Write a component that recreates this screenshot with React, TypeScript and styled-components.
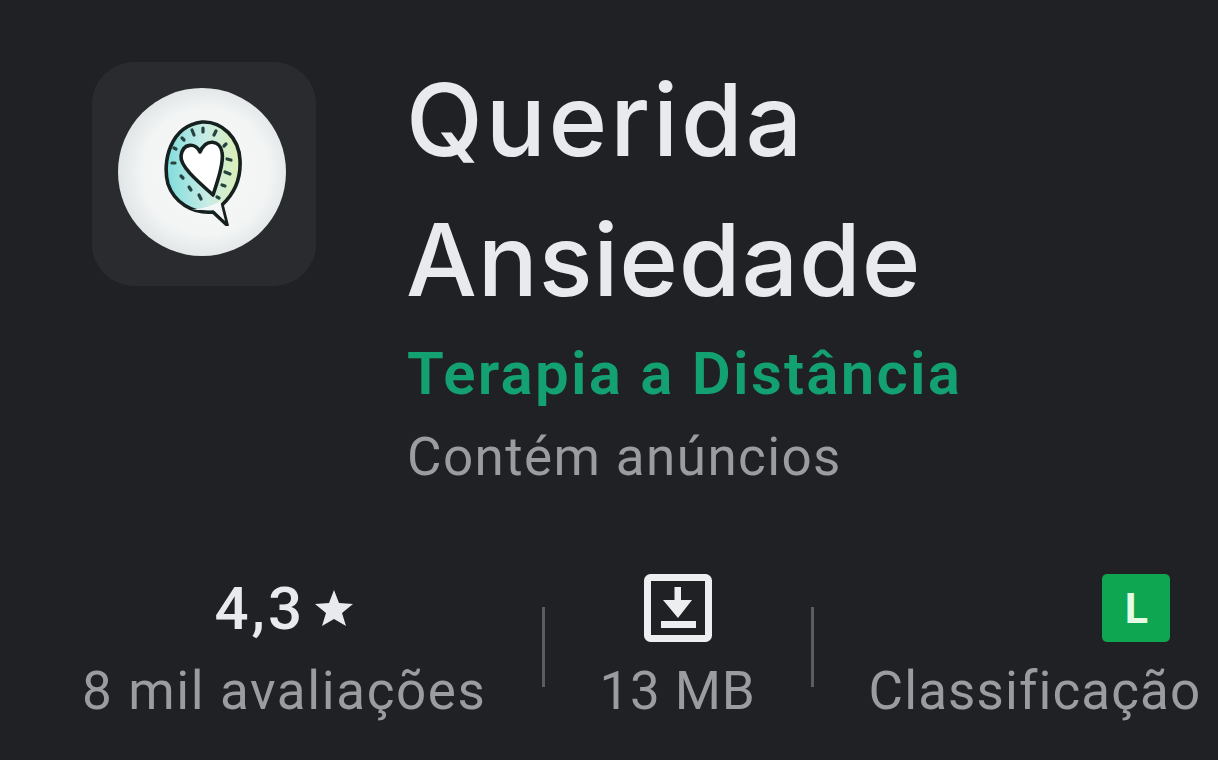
import React from 'react'
import styled, { createGlobalStyle } from 'styled-components'

const GlobalStyle = createGlobalStyle`
  html, body {
    margin: 0;
    padding: 0;
    background: #202125;
  }
`
const Page = styled.div`
  width: 1218px;
  height: 760px;
  overflow: hidden;
  background: #202125;
  font-family: Roboto, 'Liberation Sans', sans-serif;
  padding-top: 62px;
  box-sizing: border-box;
`
const Header = styled.header`
  display: flex;
  align-items: flex-start;
  padding-left: 92px;
`
const IconTile = styled.div`
  width: 224px;
  height: 224px;
  min-width: 224px;
  padding: 26px 30px 30px 26px;
  box-sizing: border-box;
  border-radius: 42px;
  background: #292b2f;
`
const IconDisc = styled.div`
  width: 168px;
  height: 168px;
  border-radius: 50%;
  background: radial-gradient(circle at 52% 50%, #f7f9f9 0%, #f3f5f5 52%, #e0e5e6 72%, #f0f3f3 88%, #f7f9f9 100%);
  display: flex;
  align-items: center;
  justify-content: center;
`
const AppInfo = styled.div`
  margin-left: 92px;
  margin-top: -12px;
`
const AppTitle = styled.h1`
  margin: 0 0 0 -2px;
  font-family: Inter, Roboto, sans-serif;
  font-size: 100px;
  font-weight: 530;
  line-height: 140px;
  color: #e9eaed;
`
const TitleLine = styled.span<{ $spacing: number }>`
  display: block;
  letter-spacing: ${p => p.$spacing}px;
`
const Developer = styled.div`
  margin-top: 9px;
  margin-left: -1px;
  font-size: 60px;
  font-weight: 600;
  line-height: 70px;
  letter-spacing: 2.2px;
  color: #13a171;
`
const AdsNote = styled.div`
  margin-top: 18px;
  margin-left: -1px;
  font-size: 53px;
  line-height: 60px;
  letter-spacing: 1.4px;
  color: #9a9ca0;
`
const Stats = styled.section`
  display: flex;
  gap: 55px;
  padding-left: 82px;
  margin-top: 87px;
`
const Stat = styled.div`
  display: flex;
  flex-direction: column;
  align-items: center;
  flex-shrink: 0;
`
const StatTop = styled.div<{ $right?: boolean }>`
  height: 68px;
  display: flex;
  align-items: center;
  justify-content: center;
  align-self: ${p => (p.$right ? 'flex-end' : 'center')};
  margin-right: ${p => (p.$right ? '31px' : '0')};
`
const Rating = styled.span`
  font-size: 60px;
  font-weight: 500;
  letter-spacing: 3px;
  color: #e9eaed;
  display: flex;
  align-items: center;
  gap: 9px;
`
const StatLabel = styled.div<{ $spacing: number }>`
  margin-top: 19px;
  font-size: 53px;
  line-height: 60px;
  letter-spacing: ${p => p.$spacing}px;
  white-space: nowrap;
  color: #9a9ca0;
`
const Divider = styled.div`
  width: 3px;
  height: 80px;
  margin-top: 33px;
  background: #5a5c60;
  flex-shrink: 0;
`
const AgeBadge = styled.div`
  width: 68px;
  height: 68px;
  border-radius: 5px;
  background: #0fa651;
  color: #e4fbe6;
  display: flex;
  align-items: center;
  justify-content: center;
  font-size: 43px;
  font-weight: 700;
`

const BubbleHeart = () => (
  <svg width="80" height="108" viewBox="0 0 80 108">
    <defs>
      <linearGradient id="bubbleFill" x1="0" y1="0.55" x2="1" y2="0.5">
        <stop offset="0" stopColor="#7fdcdc" />
        <stop offset="0.55" stopColor="#c8ece6" />
        <stop offset="1" stopColor="#dcefb4" />
      </linearGradient>
    </defs>
    <path
      d="M40 4C60 3 77 20 78 42C79 60 72 76 60 87L65 107L51 94C30 96 12 84 6 66C0 44 8 8 40 4Z"
      fill="url(#bubbleFill)"
      stroke="#15201f"
      strokeWidth="3.6"
      strokeLinejoin="round"
    />
    <path d="M58 83L63 103L52 92L30 92C42 90 50 88 58 83Z" fill="#f4f7f7" />
    <path
      d="M38 34C34 25 21 24 19 38C18 48 34 62 51 77C56 62 62 44 60 34C58 22 44 20 38 34Z"
      fill="#ffffff"
      stroke="#15201f"
      strokeWidth="3.6"
      strokeLinejoin="round"
    />
    <g stroke="#25423e" strokeWidth="3.2" strokeLinecap="round">
      <path d="M30 12L32 17" />
      <path d="M41 10L41 14" />
      <path d="M54 13L52 17" />
      <path d="M20 20L22 22" />
      <path d="M64 26L62 28" />
      <path d="M12 30L14 31" />
      <path d="M65 41L69 42" />
      <path d="M10 45L13 45" />
      <path d="M63 54L68 56" />
      <path d="M19 58L21 60" />
      <path d="M60 67L63 68" />
      <path d="M27 69L29 72" />
      <path d="M37 77L39 81" />
      <path d="M55 79L57 80" />
    </g>
  </svg>
)

const DownloadBox = () => (
  <svg width="68" height="68" viewBox="0 0 68 68">
    <rect x="3.5" y="3.5" width="61" height="61" rx="3" fill="none" stroke="#eceef0" strokeWidth="7" />
    <path d="M30.5 13H37V26H48L34 44L19 26H30.5Z" fill="#eceef0" />
    <rect x="17" y="47" width="35" height="7" fill="#eceef0" />
  </svg>
)

const StarIcon = () => (
  <svg width="40" height="38" viewBox="0 0 40 38">
    <path d="M20 1L25 14L39 15L28 24L32 37L20 30L8 37L12 24L1 15L15 14Z" fill="#e9eaed" />
  </svg>
)

const App: React.FC = () => (
  <Page>
    <GlobalStyle />
    <Header>
      <IconTile>
        <IconDisc>
          <BubbleHeart />
        </IconDisc>
      </IconTile>
      <AppInfo>
        <AppTitle>
          <TitleLine $spacing={2.8}>Querida</TitleLine>
          <TitleLine $spacing={0.8}>Ansiedade</TitleLine>
        </AppTitle>
        <Developer>Terapia a Distância</Developer>
        <AdsNote>Contém anúncios</AdsNote>
      </AppInfo>
    </Header>
    <Stats>
      <Stat>
        <StatTop>
          <Rating>
            4,3
            <StarIcon />
          </Rating>
        </StatTop>
        <StatLabel $spacing={1.6}>8 mil avaliações</StatLabel>
      </Stat>
      <Divider />
      <Stat>
        <StatTop>
          <DownloadBox />
        </StatTop>
        <StatLabel $spacing={0.8}>13 MB</StatLabel>
      </Stat>
      <Divider />
      <Stat>
        <StatTop $right>
          <AgeBadge>L</AgeBadge>
        </StatTop>
        <StatLabel $spacing={1.1}>Classificação</StatLabel>
      </Stat>
    </Stats>
  </Page>
)

export default App
